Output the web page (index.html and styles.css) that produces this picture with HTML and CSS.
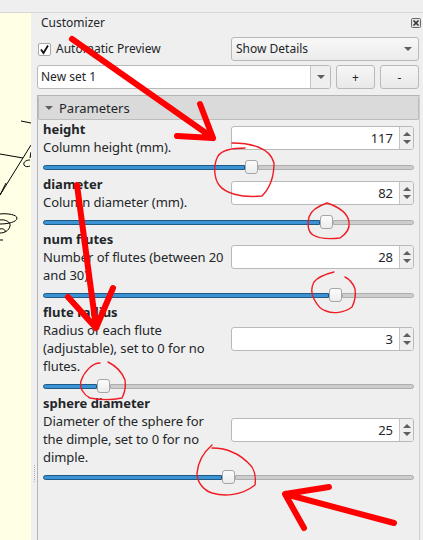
FILE: index.html
```html
<!DOCTYPE html>
<html lang="en">
<head>
    <title>Customizer</title>
    <meta charset="UTF-8">
    <link rel="stylesheet" href="styles.css">
</head>
<body>
<div class="topbar"></div>

<div class="main">
    <div class="preview">
        <svg class="model" width="31" height="527" viewBox="0 13 31 527">
            <path d="M21 121L31 123M0 154L23 158M31 145L0 195M6 183L0 195"/>
            <path d="M31 152L30 158M30 160C26 160 23 162 24 165C25 167 28 167 30 166"/>
            <path d="M0 214C8 213 17 215 17 218C17 222 8 224 0 224M0 220C5 219 11 222 10 226C9 231 4 233 0 233M0 229C3 228 6 230 5 232M0 240L3 240"/>
        </svg>
    </div>
    <div class="splitter"><span class="grip"></span></div>

    <div class="customizer">
        <div class="title-row">
            <span>Customizer</span>
            <span class="close">
                <svg width="10" height="10" viewBox="0 0 10 10">
                    <rect x="0.5" y="0.5" width="9" height="9" rx="1" class="close-box"/>
                    <path d="M2.5 2.5L7.5 7.5M7.5 2.5L2.5 7.5" class="close-x"/>
                </svg>
            </span>
        </div>

        <div class="options-row">
            <label class="check">
                <span class="check-box">
                    <svg width="11" height="11" viewBox="0 0 11 11"><path d="M2 5.5L4.5 9L9 1.5"/></svg>
                </span>
                Automatic Preview
            </label>
            <div class="combo details">
                <span class="combo-text">Show Details</span>
                <span class="arrow-down"></span>
            </div>
        </div>

        <div class="set-row">
            <div class="combo set-name">
                <span class="combo-text">New set 1</span>
                <span class="combo-button"><span class="arrow-down"></span></span>
            </div>
            <button class="button">+</button>
            <button class="button">-</button>
        </div>

        <div class="panel">
            <div class="panel-header"><span class="arrow-down"></span>Parameters</div>

            <div class="param">
                <div class="param-text">
                    <div class="param-name">height</div>
                    <div class="param-desc">Column height (mm).</div>
                </div>
                <div class="spinbox">
                    <span class="spin-value">117</span>
                    <span class="spin-buttons"><span class="arrow-up"></span><span class="arrow-down"></span></span>
                </div>
                <div class="slider">
                    <span class="fill" style="width: 202px"></span><span class="thumb"></span><span class="rest"></span>
                </div>
            </div>

            <div class="param">
                <div class="param-text">
                    <div class="param-name">diameter</div>
                    <div class="param-desc">Column diameter (mm).</div>
                </div>
                <div class="spinbox">
                    <span class="spin-value">82</span>
                    <span class="spin-buttons"><span class="arrow-up"></span><span class="arrow-down"></span></span>
                </div>
                <div class="slider">
                    <span class="fill" style="width: 277px"></span><span class="thumb"></span><span class="rest"></span>
                </div>
            </div>

            <div class="param">
                <div class="param-text">
                    <div class="param-name">num flutes</div>
                    <div class="param-desc">Number of flutes (between 20 and 30).</div>
                </div>
                <div class="spinbox">
                    <span class="spin-value">28</span>
                    <span class="spin-buttons"><span class="arrow-up"></span><span class="arrow-down"></span></span>
                </div>
                <div class="slider">
                    <span class="fill" style="width: 286px"></span><span class="thumb"></span><span class="rest"></span>
                </div>
            </div>

            <div class="param">
                <div class="param-text">
                    <div class="param-name">flute radius</div>
                    <div class="param-desc">Radius of each flute (adjustable), set to 0 for no flutes.</div>
                </div>
                <div class="spinbox">
                    <span class="spin-value">3</span>
                    <span class="spin-buttons"><span class="arrow-up"></span><span class="arrow-down"></span></span>
                </div>
                <div class="slider">
                    <span class="fill" style="width: 54px"></span><span class="thumb"></span><span class="rest"></span>
                </div>
            </div>

            <div class="param">
                <div class="param-text">
                    <div class="param-name">sphere diameter</div>
                    <div class="param-desc">Diameter of the sphere for the dimple, set to 0 for no dimple.</div>
                </div>
                <div class="spinbox">
                    <span class="spin-value">25</span>
                    <span class="spin-buttons"><span class="arrow-up"></span><span class="arrow-down"></span></span>
                </div>
                <div class="slider">
                    <span class="fill" style="width: 179px"></span><span class="thumb"></span><span class="rest"></span>
                </div>
            </div>
        </div>
    </div>
</div>

<!-- hand drawn marks on top of the screenshot -->
<svg class="marks" width="423" height="540" viewBox="0 0 423 540">
    <g class="arrows">
        <path d="M72 39L213 138M177 136L213 138L200 104"/>
        <path d="M77 185L96 327M68 297L96 328L113 288"/>
        <path d="M394 523L285 494L329 487M285 494L304 528"/>
    </g>
    <g class="circles">
        <path d="M245 148C232 148 222 150 218 156C213 165 214 178 219 185C225 193 240 198 262 196C270 188 274 176 274 163C272 155 266 150 258 147C250 144 240 143 232 143"/>
        <path d="M327 203C318 206 311 211 309 217C307 224 308 232 313 235C320 239 332 239 340 238C346 234 350 228 349 222C348 215 342 208 327 203Z"/>
        <path d="M334 272C326 274 317 278 314 282C311 287 311 294 314 299C317 305 322 310 326 311C333 314 344 313 352 307C355 301 356 295 355 289C353 283 349 279 345 277"/>
        <path d="M100 363C92 363 84 372 81 381C79 388 84 395 90 398C100 400 112 400 122 398C125 392 126 386 125 380C122 372 116 366 108 362"/>
        <path d="M212 445C204 452 198 462 197 473C197 482 203 490 212 493C222 496 240 497 255 485C256 478 255 472 252 467C246 460 240 455 232 452C226 449 218 448 212 448"/>
    </g>
</svg>
</body>
</html>
```

FILE: styles.css
```css
body {
    margin: 0;
    width: 423px;
    height: 540px;
    overflow: hidden;
    position: relative;
    background-color: #efefef;
    color: #232629;
    font-family: "Noto Sans", sans-serif;
    font-size: 13px;
    line-height: 18px;
}

.topbar {
    height: 12px;
    border-bottom: 1px solid #d8d8d8;
}

.main {
    display: flex;
    height: 527px;
}

.preview {
    width: 31px;
    background-color: #ffffe5;
}
.model {
    display: block;
}
.model path {
    fill: none;
    stroke: #000000;
    stroke-width: 1;
}

.splitter {
    width: 6px;
    padding-top: 452px;
    box-sizing: border-box;
}
.splitter .grip {
    display: block;
    width: 1px;
    height: 17px;
    margin-left: 3px;
    border-left: 1px dotted #b0b0b0;
}

.customizer {
    flex: 1;
    min-width: 0;
    display: flex;
    flex-direction: column;
    padding-right: 4px;
}

.title-row {
    display: flex;
    justify-content: space-between;
    align-items: center;
    height: 19px;
    padding: 0 0 4px 4px;
    font-size: 12px;
}
.title-row .close {
    display: block;
    height: 10px;
    margin-right: -2px;
}
.close svg {
    display: block;
}
.close-box {
    fill: #e4e4e4;
    stroke: #666666;
}
.close-x {
    fill: none;
    stroke: #333333;
    stroke-width: 1.6;
}

.options-row {
    display: flex;
    justify-content: space-between;
    align-items: center;
    margin-top: 1px;
    font-size: 12px;
}

.check {
    display: flex;
    align-items: center;
    gap: 5px;
    padding-left: 1px;
}
.check-box {
    display: block;
    width: 11px;
    height: 11px;
    background-color: #ffffff;
    border: 1px solid #a8a8a8;
    border-radius: 2px;
}
.check-box svg {
    display: block;
}
.check-box path {
    fill: none;
    stroke: #111111;
    stroke-width: 1.8;
}

.combo {
    display: flex;
    align-items: center;
    justify-content: space-between;
    height: 24px;
    box-sizing: border-box;
    border: 1px solid #b9b9b9;
    border-radius: 3px;
    padding-left: 3px;
    font-size: 12px;
}
.combo.details {
    width: 188px;
    padding-left: 4px;
    padding-right: 6px;
    background: linear-gradient(#f8f8f8, #ebebeb);
}
.combo.set-name {
    flex: 1;
    background-color: #ffffff;
}
.combo-button {
    display: flex;
    align-items: center;
    justify-content: center;
    width: 19px;
    height: 22px;
    border-left: 1px solid #c4c4c4;
    background-color: #efefef;
    border-radius: 0 2px 2px 0;
}

.set-row {
    display: flex;
    gap: 5px;
    margin-top: 4px;
}
.button {
    width: 39px;
    height: 24px;
    padding: 0;
    border: 1px solid #b9b9b9;
    border-radius: 3px;
    background: linear-gradient(#f6f6f6, #e9e9e9);
    color: #232629;
    font-family: "Noto Sans", sans-serif;
    font-size: 12px;
}

.arrow-down, .arrow-up {
    display: block;
    width: 0;
    height: 0;
    border-left: 4px solid transparent;
    border-right: 4px solid transparent;
}
.arrow-down {
    border-top: 4px solid #5f5f5f;
}
.arrow-up {
    border-bottom: 4px solid #5f5f5f;
}

.panel {
    flex: 1;
    margin-top: 6px;
    width: 383px;
    box-sizing: border-box;
    border-left: 1px solid #b4b4b4;
    border-right: 1px solid #cfcfcf;
    border-top: 1px solid #b4b4b4;
    margin-bottom: -1px;
}
.panel-header {
    display: flex;
    align-items: center;
    gap: 6px;
    height: 24px;
    box-sizing: border-box;
    padding-left: 6px;
    background-color: #dadada;
    border: 1px solid #bcbcbc;
    border-top: 0;
    border-radius: 2px;
}

.param {
    display: grid;
    grid-template-columns: 188px 183px;
    align-items: center;
    padding-left: 5px;
}
.param-name {
    font-weight: bold;
}
.param-desc {
    letter-spacing: -0.07px;
}
.param-text {
    padding-right: 6px;
}

.spinbox {
    display: flex;
    justify-content: space-between;
    align-items: center;
    height: 24px;
    box-sizing: border-box;
    background-color: #ffffff;
    border: 1px solid #b9b9b9;
    border-radius: 3px;
}
.spin-value {
    flex: 1;
    text-align: right;
    padding-right: 6px;
}
.spin-buttons {
    display: flex;
    flex-direction: column;
    align-items: center;
    justify-content: center;
    gap: 4px;
    width: 13px;
    height: 22px;
    background-color: #efefef;
    border-left: 1px solid #c4c4c4;
    border-radius: 0 2px 2px 0;
}

.slider {
    grid-column: 1 / 3;
    display: flex;
    align-items: center;
    height: 16px;
    padding-top: 3px;
}
.slider .fill {
    display: block;
    height: 5px;
    box-sizing: border-box;
    background-color: #3b93d6;
    border: 1px solid #1f5a85;
    border-radius: 3px 0 0 3px;
}
.slider .rest {
    display: block;
    flex: 1;
    height: 5px;
    box-sizing: border-box;
    background-color: #cdcdcd;
    border: 1px solid #aeaeae;
    border-radius: 0 3px 3px 0;
}
.slider .thumb {
    display: block;
    flex: none;
    width: 13px;
    height: 14px;
    box-sizing: border-box;
    background: linear-gradient(#fcfcfc, #ececec);
    border: 1px solid #a6a6a6;
    border-radius: 3px;
}

.marks {
    position: absolute;
    top: 0;
    left: 0;
    pointer-events: none;
}
.marks path {
    fill: none;
    stroke-linecap: round;
    stroke-linejoin: round;
}
.arrows path {
    stroke: #fe0000;
    stroke-width: 6;
}
.circles path {
    stroke: #f01c24;
    stroke-width: 1.4;
}
```
